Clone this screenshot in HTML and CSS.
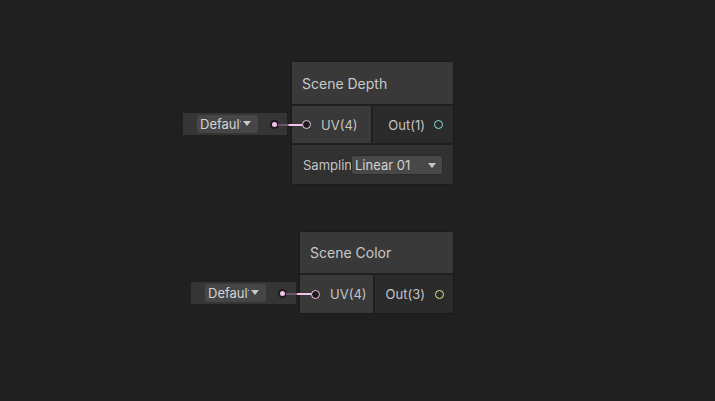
FILE: index.html
```html
<!DOCTYPE html>
<html>
<head>
<meta charset="utf-8">
<link rel="stylesheet" href="styles.css">
</head>
<body>
<div class="canvas">
  <div class="group group-depth">
    <div class="widget">
      <div class="dropdown small"><span class="dd-text">Default</span><span class="arrow"></span></div>
      <span class="dot"></span>
    </div>
    <div class="node node-depth">
      <div class="header">Scene Depth</div>
      <div class="ports">
        <div class="inputs"><span class="port pink"></span><span class="label">UV(4)</span></div>
        <div class="outputs"><span class="label">Out(1)</span><span class="port cyan"></span></div>
      </div>
      <div class="settings">
        <span class="set-label">Sampling</span>
        <div class="dropdown wide"><span class="dd-text">Linear 01</span><span class="arrow"></span></div>
      </div>
    </div>
    <div class="edge"></div>
  </div>

  <div class="group group-color">
    <div class="widget">
      <div class="dropdown small"><span class="dd-text">Default</span><span class="arrow"></span></div>
      <span class="dot"></span>
    </div>
    <div class="node node-color">
      <div class="header">Scene Color</div>
      <div class="ports">
        <div class="inputs"><span class="port pink"></span><span class="label">UV(4)</span></div>
        <div class="outputs"><span class="label">Out(3)</span><span class="port yellow"></span></div>
      </div>
    </div>
    <div class="edge"></div>
  </div>
</div>
</body>
</html>
```

FILE: styles.css
```css
html, body {
  margin: 0;
  padding: 0;
  background: #202020;
}
body {
  font-family: "Inter", "Noto Sans", "Liberation Sans", sans-serif;
  color: #c4c4c4;
}
.canvas {
  position: relative;
  width: 715px;
  height: 401px;
  overflow: hidden;
  background: #202020;
}
.group {
  position: absolute;
  display: flex;
  align-items: flex-start;
}
.group-depth { left: 183px; top: 61px; }
.group-color { left: 191px; top: 231px; }

.widget {
  display: flex;
  align-items: center;
  height: 22px;
  background: #353535;
  box-sizing: border-box;
  padding-left: 14px;
}
.group-depth .widget { width: 104px; margin-top: 52px; margin-right: 4px; }
.group-color .widget { width: 105px; margin-top: 51px; margin-right: 3px; }

.dropdown {
  position: relative;
  height: 18px;
  background: #464646;
  border-radius: 3px;
  box-sizing: border-box;
  display: flex;
  align-items: center;
  overflow: hidden;
  font-size: 13px;
  color: #d2d2d2;
}
.dropdown.small {
  width: 61px;
  padding-left: 3px;
}
.dd-text {
  white-space: nowrap;
  overflow: hidden;
}
.dropdown.small .dd-text { width: 41px; }
.arrow {
  position: absolute;
  right: 5px;
  top: 7px;
  width: 0;
  height: 0;
  border-left: 4px solid transparent;
  border-right: 4px solid transparent;
  border-top: 5px solid #c6c6c6;
}
.dropdown.small .arrow { right: 7px; top: 6px; }
.dot {
  width: 5px;
  height: 5px;
  border-radius: 50%;
  background: #f2c2ea;
  box-shadow: 0 0 0 2px #1c1c1c;
  margin-left: 14px;
}

.node {
  border: 1px solid #1b1b1b;
  background: #1f1f1f;
  display: flex;
  flex-direction: column;
  gap: 2px;
}
.node-depth { width: 161px; }
.node-color { width: 153px; }

.header {
  background: #393939;
  height: 42px;
  display: flex;
  align-items: center;
  padding-left: 10px;
  font-size: 14px;
  color: #c8c8c8;
}
.node-color .header { height: 41px; }

.ports {
  display: flex;
  gap: 2px;
  height: 37px;
}
.node-color .ports { height: 38px; }
.inputs {
  background: #393939;
  display: flex;
  align-items: center;
  padding-left: 10px;
  gap: 10px;
  box-sizing: border-box;
}
.node-depth .inputs { width: 79px; }
.node-color .inputs { width: 73px; padding-left: 11px; }
.outputs {
  flex: 1;
  background: #2b2b2b;
  display: flex;
  align-items: center;
  justify-content: flex-end;
  padding-right: 10px;
  gap: 9px;
}
.node-color .outputs { padding-right: 9px; gap: 10px; }
.label {
  font-size: 13px;
  color: #c4c4c4;
}
.port {
  width: 9px;
  height: 9px;
  box-sizing: border-box;
  border-radius: 50%;
  border: 1.5px solid;
  background: #1c1c1c;
  position: relative;
  z-index: 2;
}
.port.pink { border-color: #f2c2ea; }
.port.cyan { border-color: #7fdfe2; background: transparent; }
.port.yellow { border-color: #e6e68a; background: transparent; }

.settings {
  background: #313131;
  height: 39px;
  display: flex;
  align-items: center;
  padding-left: 11px;
}
.set-label {
  width: 48px;
  overflow: hidden;
  white-space: nowrap;
  font-size: 13px;
  color: #c4c4c4;
}
.dropdown.wide {
  width: 92px;
  height: 20px;
  padding-left: 3px;
  border: 1px solid #2a2a2a;
  background: #484848;
}
.dropdown.wide .arrow { right: 6px; top: 7px; }

.edge {
  position: absolute;
  height: 2px;
  background: linear-gradient(90deg, #6a5566 0, #6a5566 40%, #f2c2ea 45%, #f2c2ea 100%);
  z-index: 1;
}
.group-depth .edge { left: 95px; width: 25px; top: 63px; }
.group-color .edge { left: 95px; width: 26px; top: 62px; }
```
